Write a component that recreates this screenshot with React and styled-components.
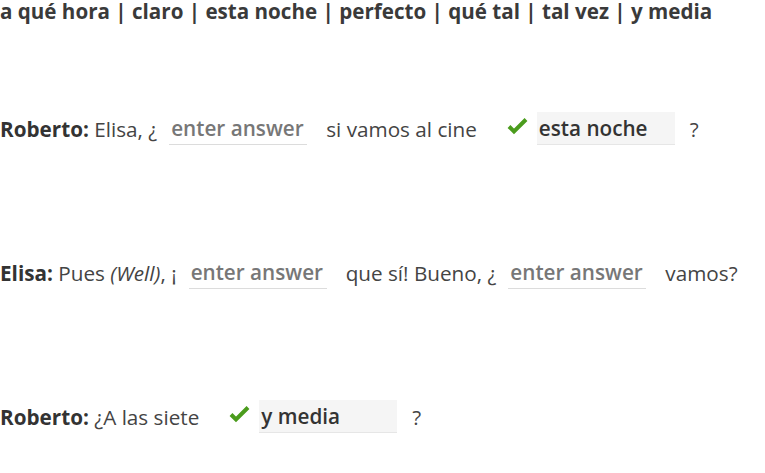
import React from 'react'
import styled, { createGlobalStyle } from 'styled-components'

const GlobalStyle = createGlobalStyle`
  body {
    margin: 0;
    background: #fff;
    font-family: "Open Sans", "Noto Sans", sans-serif;
    color: #3b3b3b;
  }
`

const WordBank = styled.div`
  font-size: 20.6px;
  font-weight: 700;
  line-height: 22px;
  color: #3a3a3a;
  white-space: pre;
`

const Dialogue = styled.div`
  display: flex;
  flex-direction: column;
  gap: 111px;
  margin-top: 90px;
`

const Row = styled.div`
  display: flex;
  align-items: center;
  height: 33px;
  font-size: 20.7px;
  white-space: pre;
`

const Text = styled.span`
  color: #444;
  line-height: 28px;
  b {
    color: #333;
    font-weight: 700;
  }
  i {
    font-style: italic;
  }
`

const Blank = styled.input`
  box-sizing: border-box;
  width: 138px;
  height: 33px;
  margin: 0 19px 0 12px;
  padding: 0 2px;
  border: none;
  border-bottom: 1px solid #dcdcdc;
  background: ${p => (p.$done ? '#f5f5f5' : 'transparent')};
  font-family: inherit;
  font-size: 20.7px;
  font-weight: 600;
  color: #333;
  outline: none;
  &::placeholder {
    color: #777;
    opacity: 1;
  }
`

const Done = styled(Blank)`
  margin: 0 15px 0 0;
  border-bottom-color: #e6e6e6;
`

const Tick = styled.svg`
  width: 21px;
  height: 18px;
  margin: 0 9px 6px 30px;
  flex: none;
`

const Check = () => (
  <Tick viewBox="0 0 21 18">
    <path d="M2 9.5 L7 14.5 L19 2.5" fill="none" stroke="#4b9c1d" strokeWidth="4" strokeLinejoin="miter" />
  </Tick>
)

const words = ['a qué hora', 'claro', 'esta noche', 'perfecto', 'qué tal', 'tal vez', 'y media']

export default function App() {
  return (
    <>
      <GlobalStyle />
      <WordBank>{words.join(' | ')}</WordBank>
      <Dialogue>
        <Row>
          <Text><b>Roberto:</b> Elisa, ¿</Text>
          <Blank placeholder="enter answer" />
          <Text>si vamos al cine</Text>
          <Check />
          <Done $done readOnly value="esta noche" />
          <Text>?</Text>
        </Row>
        <Row>
          <Text><b>Elisa:</b> Pues <i>(Well)</i>, ¡</Text>
          <Blank placeholder="enter answer" />
          <Text>que sí! Bueno, ¿</Text>
          <Blank placeholder="enter answer" />
          <Text>vamos?</Text>
        </Row>
        <Row>
          <Text><b>Roberto:</b> ¿A las siete</Text>
          <Check />
          <Done $done readOnly value="y media" />
          <Text>?</Text>
        </Row>
      </Dialogue>
    </>
  )
}
